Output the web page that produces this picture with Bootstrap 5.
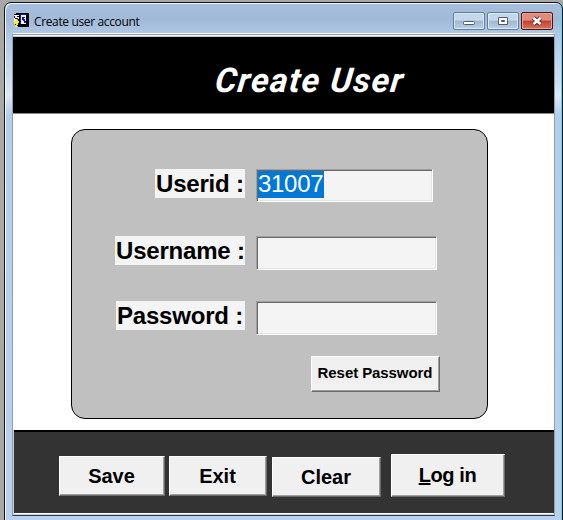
<!DOCTYPE html>
<html lang="en">
<head>
<meta charset="utf-8">
<meta name="viewport" content="width=device-width, initial-scale=1">
<title>Create user account</title>
<link href="https://cdn.jsdelivr.net/npm/bootstrap@5.3.0/dist/css/bootstrap.min.css" rel="stylesheet">
<style>
html,body{height:520px;overflow:hidden}
body{background:#a9a8a6;font-family:"Liberation Sans",Arial,sans-serif;color:#000;padding:2px 0 0 4px}
.win{width:559px;height:530px;border:1px solid #101418;border-radius:7px 7px 0 0;background:linear-gradient(#a5bfdd 0,#a0bad8 16px,#b0cae7 34px,#cfe0f2 80px,#dde9f6 92px,#b4cdea 112px,#b9d1ec 100%);box-shadow:inset 1px 1px #f4fafd,inset -1px 0 #58d8f8;padding:0 7px}
.titlebar{height:30px;padding:9px 2px 0 2px}
.app-icon{margin:1px 0 0 -1px}
.caption-text{font:12px/16px "Open Sans","Noto Sans",sans-serif;letter-spacing:-.36px;margin-left:5px;padding-top:2px}
.wb{width:32px;height:18px;border:1px solid #667d9c;border-radius:2px;padding:0;box-shadow:inset 0 0 0 1px #dbe8f5;background:linear-gradient(#c5d7ea 0 45%,#9db7d2 50%,#b9d1e9)}
.wb.close-x{border-color:#4b1712;box-shadow:inset 0 0 0 1px #e9a296;background:linear-gradient(#df8c7c 0 45%,#c6402b 50%,#d37560)}
.caption-buttons{gap:2px}
.client{width:543px;height:483px;border:1px solid #949da8;border-top:1px solid #f7f9fb;border-bottom:1px solid #353a41}
.edge{height:2px;background:#949aa3;border-bottom:1px solid #fff;margin-bottom:1px}
.hero{height:77px;background:#000;border-bottom:1px solid #888}
.hero h1{font:italic 700 34px/40px Roboto,sans-serif;color:#fff;margin:0 0 0 55px;padding-top:9px;letter-spacing:1.3px;transform:skewX(-7deg);white-space:nowrap}
.main{height:316px;background:#fff;padding:15px 0 0 58px}
.panel{width:417px;height:290px;background:#c0c0c0;border:1px solid #000;border-radius:14px;padding:39px 50px 0 42px}
.line{height:34px}
.line.second{margin-top:33px}.line.third{margin-top:31px}
.tag{background:#f4f4f4;font-size:24px;line-height:29px;font-weight:700;padding:0 1px;letter-spacing:-.2px;width:130px;height:29px;white-space:nowrap}
.tag.id{width:90px}.tag.pw{width:129px}
.field{width:181px;height:34px;background:#f4f4f4;border:1px solid;border-color:#a0a0a0 #fff #fff #a0a0a0;box-shadow:inset 1px 1px #696969,inset -1px -1px #e3e3e3;margin-left:11px;font-size:24px;line-height:28px;padding:1px 0 0 1px}
.field.short{width:177px;height:33px}
.sel{background:#0078d7;color:#fff;width:66px;height:27px;letter-spacing:-.3px;line-height:26px}
.btn.raised{border:1px solid;border-color:#fff #696969 #696969 #fff;box-shadow:inset -1px -1px #a0a0a0;border-radius:0;background:#f0f0f0;color:#000;font-weight:700;font-size:20px;line-height:1;padding:0 1px 1px 0}
.btn.raised.reset{width:129px;height:36px;font-size:15px;letter-spacing:-.08px;margin:21px -3px 0 0;padding-bottom:3px}
.actions{height:84px;background:#333;border-top:2px solid #000;border-bottom:1px solid #fff;padding:24px 0 0 45px;margin-left:1px}
.b-save{width:106px;height:40px}.b-exit{width:98px;height:40px;margin-left:4px}
.b-clear{width:109px;height:40px;margin:1px 0 0 5px}.b-login{width:114px;height:43px;margin:-2px 0 0 10px}
.b-login span{letter-spacing:-.4px}
</style>
<script src="https://cdn.jsdelivr.net/npm/bootstrap@5.3.0/dist/js/bootstrap.bundle.min.js"></script>
</head>
<body>
<div class="win">
 <div class="titlebar d-flex align-items-start">
  <svg class="app-icon" width="16" height="16" viewBox="0 0 16 16" shape-rendering="crispEdges">
   <path d="M3 0h13v14H5v-1H2v-2h3V2H1V1h2z" fill="#000"/>
   <path d="M1 2h5v8H1zM7 2h6v9H7z" fill="#fff"/><path d="M7 1h6v1H7zM7 2h1v9H7zM9 4h3v1h-1v1h1v2h1v2h-2V8h-1V7H9z" fill="#0010e8"/>
   <path d="M1 3h1v2H1zM2 5h2v1H2zM4 3h2v1H4zM5 6h1v2H5z" fill="#000"/><path d="M4 5h1v2H4z" fill="#d00"/>
   <path d="M2 7h2v1h2v2H5v2H4v2H2v-2h1v-1H1V9h1z" fill="#f4ee20"/>
  </svg>
  <div class="caption-text">Create user account</div>
  <div class="caption-buttons ms-auto d-flex">
   <button class="wb d-flex" aria-label="Minimize"><svg width="30" height="16"><rect x="9.500" y="8.500" width="11" height="3" rx="1" fill="#fff" stroke="#535b68"/></svg></button>
   <button class="wb d-flex" aria-label="Maximize"><svg width="30" height="16"><path d="M10.500 4.500h9v7h-9z" fill="#fff" stroke="#535b68"/><path d="M13.500 7.500h3v1h-3z" fill="#9ab" stroke="#535b68"/></svg></button>
   <button class="wb close-x d-flex" aria-label="Close"><svg width="30" height="16"><path d="M11.500 5l7 6M18.500 5l-7 6" stroke="#55313a" stroke-width="4.600"/><path d="M11.500 5l7 6M18.500 5l-7 6" stroke="#fff" stroke-width="2.600"/></svg></button>
  </div>
 </div>
 <div class="client">
  <div class="edge"></div>
  <header class="hero d-flex align-items-center justify-content-center"><h1>Create User</h1></header>
  <main class="main">
   <form class="panel">
    <div class="line d-flex"><label class="tag id ms-auto">Userid :</label><div class="field short me-1"><div class="sel">31007</div></div></div>
    <div class="line second d-flex"><label class="tag ms-auto">Username :</label><div class="field"></div></div>
    <div class="line third d-flex"><label class="tag pw ms-auto">Password :</label><div class="field"></div></div>
    <div class="d-flex justify-content-end"><button type="button" class="btn raised reset">Reset Password</button></div>
   </form>
  </main>
  <footer class="actions d-flex align-items-start">
   <button class="btn raised b-save">Save</button><button class="btn raised b-exit">Exit</button><button class="btn raised b-clear">Clear</button><button class="btn raised b-login"><span><u>L</u>og in</span></button>
  </footer>
 </div>
</div>
</body>
</html>
